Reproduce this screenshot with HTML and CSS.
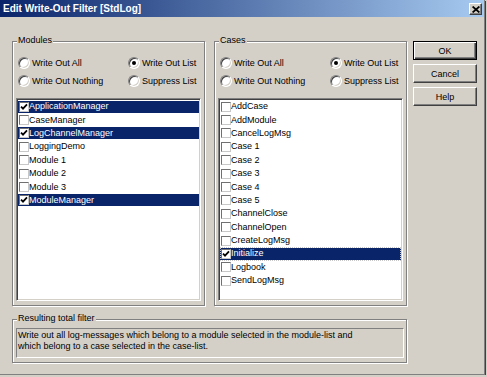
FILE: index.html
```html
<!DOCTYPE html>
<html>
<head>
<meta charset="utf-8">
<title>Edit Write-Out Filter</title>
<link rel="stylesheet" href="styles.css">
</head>
<body>
<div class="window">
  <div class="titlebar">
    <span class="title">Edit Write-Out Filter [StdLog]</span>
    <span class="close"><svg width="8" height="7" viewBox="0 0 8 7"><path d="M0.6 0.5 L7.4 6.5 M7.4 0.5 L0.6 6.5" stroke="#000" stroke-width="1.7" fill="none"/></svg></span>
  </div>
  <div class="client">
    <div class="main">
      <div class="lists">
        <div class="group list-group">
          <span class="group-label">Modules</span>
          <div class="radios">
            <div class="opt"><span class="radio"></span>Write Out All</div>
            <div class="opt"><span class="radio on"></span>Write Out List</div>
            <div class="opt"><span class="radio"></span>Write Out Nothing</div>
            <div class="opt"><span class="radio"></span>Suppress List</div>
          </div>
          <div class="listbox">
            <div class="item sel"><span class="cb"><svg width="8" height="8" viewBox="0 0 8 8"><path d="M1 3.6 L3 5.6 L7 1.4" stroke="#000" stroke-width="1.8" fill="none"/></svg></span>ApplicationManager</div>
            <div class="item"><span class="cb"></span>CaseManager</div>
            <div class="item sel"><span class="cb"><svg width="8" height="8" viewBox="0 0 8 8"><path d="M1 3.6 L3 5.6 L7 1.4" stroke="#000" stroke-width="1.8" fill="none"/></svg></span>LogChannelManager</div>
            <div class="item"><span class="cb"></span>LoggingDemo</div>
            <div class="item"><span class="cb"></span>Module 1</div>
            <div class="item"><span class="cb"></span>Module 2</div>
            <div class="item"><span class="cb"></span>Module 3</div>
            <div class="item sel"><span class="cb"><svg width="8" height="8" viewBox="0 0 8 8"><path d="M1 3.6 L3 5.6 L7 1.4" stroke="#000" stroke-width="1.8" fill="none"/></svg></span>ModuleManager</div>
          </div>
        </div>
        <div class="group list-group">
          <span class="group-label">Cases</span>
          <div class="radios">
            <div class="opt"><span class="radio"></span>Write Out All</div>
            <div class="opt"><span class="radio on"></span>Write Out List</div>
            <div class="opt"><span class="radio"></span>Write Out Nothing</div>
            <div class="opt"><span class="radio"></span>Suppress List</div>
          </div>
          <div class="listbox">
            <div class="item"><span class="cb"></span>AddCase</div>
            <div class="item"><span class="cb"></span>AddModule</div>
            <div class="item"><span class="cb"></span>CancelLogMsg</div>
            <div class="item"><span class="cb"></span>Case 1</div>
            <div class="item"><span class="cb"></span>Case 2</div>
            <div class="item"><span class="cb"></span>Case 3</div>
            <div class="item"><span class="cb"></span>Case 4</div>
            <div class="item"><span class="cb"></span>Case 5</div>
            <div class="item"><span class="cb"></span>ChannelClose</div>
            <div class="item"><span class="cb"></span>ChannelOpen</div>
            <div class="item"><span class="cb"></span>CreateLogMsg</div>
            <div class="item sel focus"><span class="cb"><svg width="8" height="8" viewBox="0 0 8 8"><path d="M1 3.6 L3 5.6 L7 1.4" stroke="#000" stroke-width="1.8" fill="none"/></svg></span>Initialize</div>
            <div class="item"><span class="cb"></span>Logbook</div>
            <div class="item"><span class="cb"></span>SendLogMsg</div>
          </div>
        </div>
      </div>
      <div class="group result">
        <span class="group-label">Resulting total filter</span>
        <div class="static">Write out all log-messages which belong to a module selected in the module-list and<br>which belong to a case selected in the case-list.</div>
      </div>
    </div>
    <div class="buttons">
      <button class="btn default">OK</button>
      <button class="btn">Cancel</button>
      <button class="btn">Help</button>
    </div>
  </div>
</div>
</body>
</html>
```

FILE: styles.css
```css
html, body {
  margin: 0;
  padding: 0;
  background: #d4d0c8;
}
body {
  font-family: "Liberation Sans", Arial, sans-serif;
  font-size: 9px;
  color: #000;
}
.window {
  width: 484px;
  height: 374px;
  background: #d4d0c8;
  border-right: 1px solid #808080;
  border-bottom: 1px solid #808080;
  box-shadow: 1px 1px 0 #404040;
  display: flex;
  flex-direction: column;
}
.titlebar {
  height: 17px;
  flex: none;
  background: linear-gradient(to right, #0a246a, #a6caf0);
  display: flex;
  align-items: flex-start;
  justify-content: space-between;
}
.title {
  color: #fff;
  font-weight: bold;
  font-size: 10px;
  line-height: 17px;
  padding-left: 3px;
}
.close {
  margin: 3px 2px 0 0;
  width: 13px;
  height: 12px;
  box-sizing: border-box;
  background: #d4d0c8;
  border: 1px solid;
  border-color: #fff #404040 #404040 #fff;
  box-shadow: inset -1px -1px #808080;
  display: flex;
  align-items: center;
  justify-content: center;
}
.client {
  display: flex;
  padding: 24px 0 0 12px;
}
.main {
  width: 395px;
  display: flex;
  flex-direction: column;
}
.lists {
  display: flex;
  gap: 9px;
}
.group {
  position: relative;
  box-sizing: border-box;
  border: 1px solid #808080;
  box-shadow: 1px 1px 0 #fff, inset 1px 1px 0 #fff;
}
.group-label {
  position: absolute;
  top: -7px;
  left: 4px;
  padding: 0 1px;
  line-height: 11px;
  background: #d4d0c8;
  white-space: nowrap;
}
.list-group {
  width: 193px;
  height: 265px;
  display: flex;
  flex-direction: column;
  padding: 12px 3px 4px 3px;
}
.radios {
  display: grid;
  grid-template-columns: 110px 1fr;
  grid-auto-rows: 18px;
  padding-left: 2px;
}
.opt {
  display: flex;
  align-items: center;
  gap: 2px;
  white-space: nowrap;
}
.radio {
  position: relative;
  flex: none;
  width: 12px;
  height: 12px;
  box-sizing: border-box;
  border-radius: 50%;
  background: #fff;
  border: 1px solid;
  border-color: #808080 #fff #fff #808080;
  box-shadow: inset 1px 1px #404040, inset -1px -1px #d4d0c8;
}
.radio.on::after {
  content: "";
  position: absolute;
  left: 3px;
  top: 3px;
  width: 4px;
  height: 4px;
  border-radius: 50%;
  background: #000;
}
.listbox {
  margin-top: 8px;
  flex: 1;
  background: #fff;
  border: 1px solid;
  border-color: #808080 #fff #fff #808080;
  box-shadow: inset 1px 1px #404040, inset -1px -1px #d4d0c8;
  padding: 1px;
  overflow: hidden;
}
.item {
  height: 13.4px;
  display: flex;
  align-items: center;
  padding-left: 1px;
  white-space: nowrap;
  line-height: 11px;
}
.item.sel {
  color: #fff;
  background: linear-gradient(#0a246a, #0a246a) 0 0.7px / 100% 12px no-repeat;
}
.item.focus {
  outline: 1px dotted #c8c8c8;
  outline-offset: -1px;
}
.cb {
  flex: none;
  width: 10px;
  height: 10px;
  box-sizing: border-box;
  border: 1px solid;
  border-color: #707070 #c8c8c8 #c8c8c8 #707070;
  background: #fff;
  display: flex;
  align-items: center;
  justify-content: center;
}
.cb svg {
  display: block;
}
.result {
  margin-top: 13px;
  height: 44px;
  padding: 8px 2px 4px 3px;
}
.static {
  height: 100%;
  box-sizing: border-box;
  border: 1px solid;
  border-color: #808080 #fff #fff #808080;
  padding: 1px 0 0 1px;
  line-height: 10.7px;
  white-space: nowrap;
}
.buttons {
  margin-left: 6px;
  width: 64px;
  display: flex;
  flex-direction: column;
  gap: 4px;
}
.btn {
  height: 19px;
  margin: 0;
  padding: 0;
  box-sizing: border-box;
  font: inherit;
  color: #000;
  background: #d4d0c8;
  border: 1px solid;
  border-color: #fff #404040 #404040 #fff;
  box-shadow: inset -1px -1px #808080;
  display: flex;
  align-items: center;
  justify-content: center;
}
.btn.default {
  border-color: #000;
  box-shadow: inset 1px 1px #fff, inset -1px -1px #404040, inset -2px -2px #808080;
}
```
